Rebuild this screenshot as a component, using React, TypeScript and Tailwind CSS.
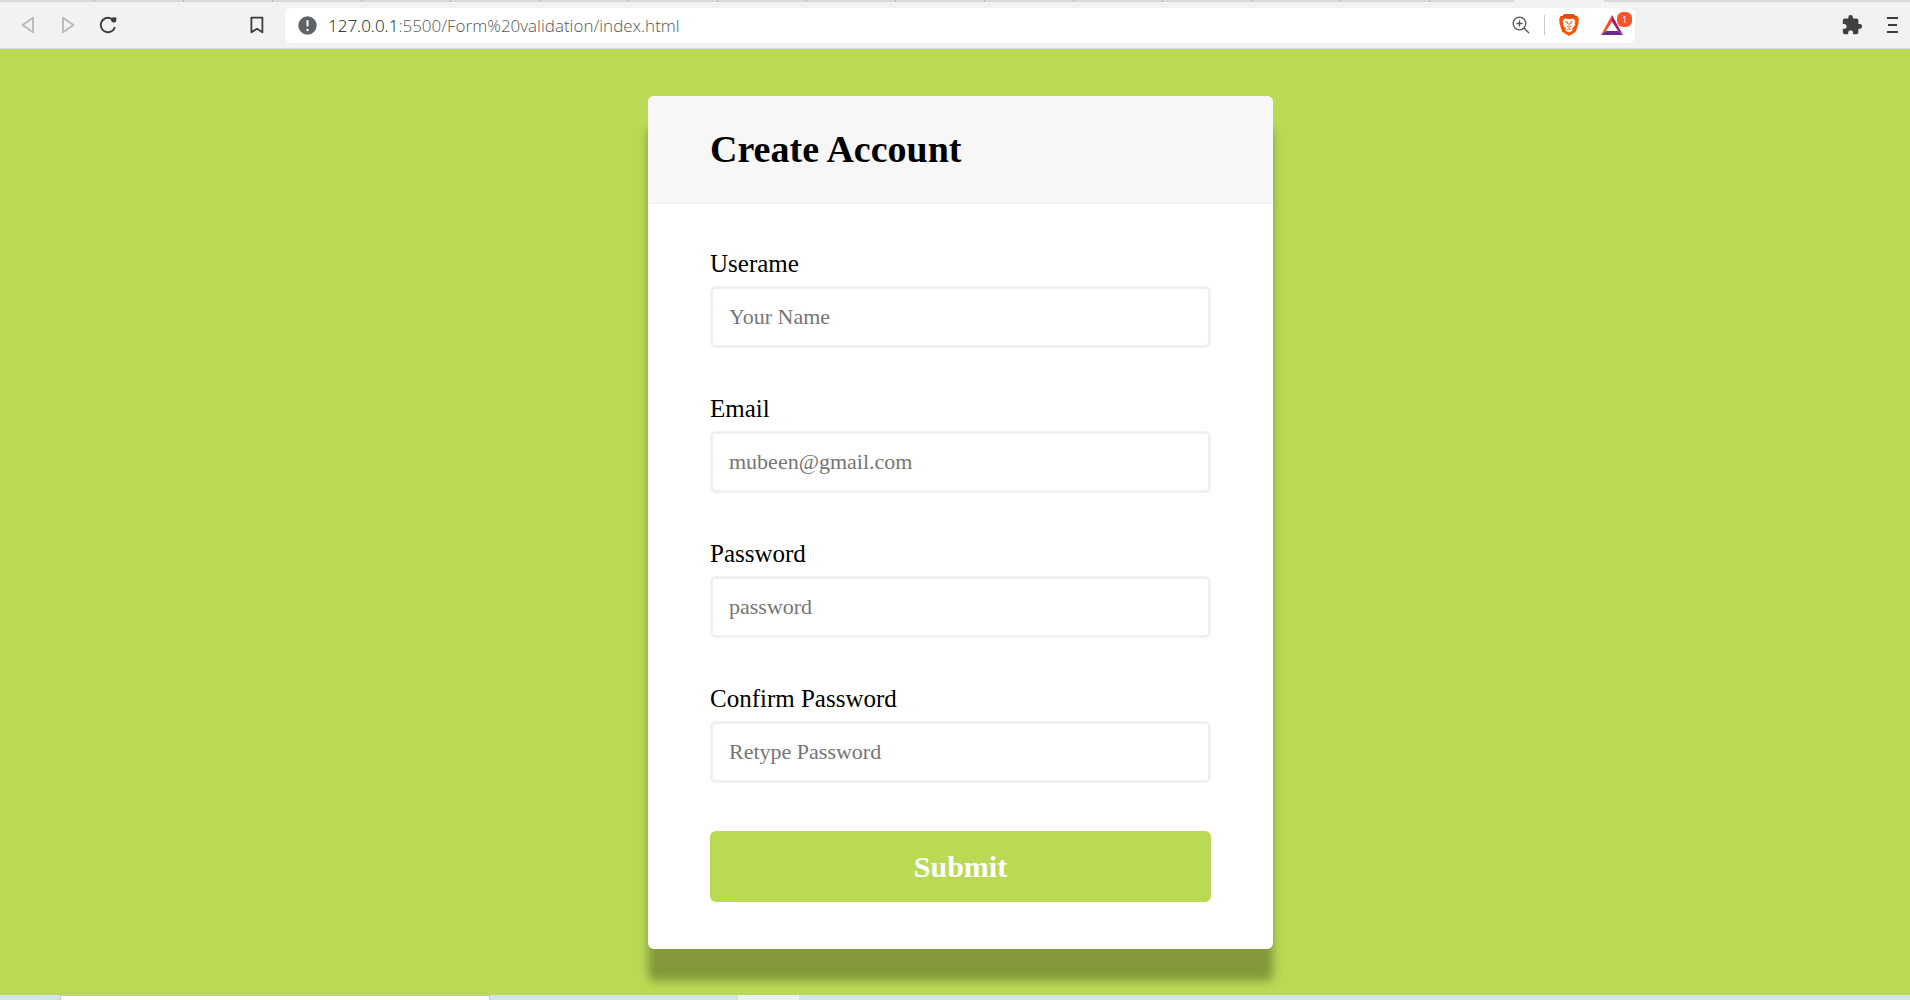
import React from "react";

const tabEdges = Array.from({ length: 16 });

const fields = [
  { id: "username", label: "Userame", placeholder: "Your Name", type: "text" },
  { id: "email", label: "Email", placeholder: "mubeen@gmail.com", type: "email" },
  { id: "password", label: "Password", placeholder: "password", type: "password" },
  { id: "confirm", label: "Confirm Password", placeholder: "Retype Password", type: "password" },
];

function TabStrip() {
  return (
    <div className="flex h-[2px] bg-[#d5dade] pl-[6px]">
      {tabEdges.map((_, i) => (
        <div key={i} className="w-[89px] shrink-0 border-r border-[#b3b8bc]" />
      ))}
      <div className="ml-[84px] w-[90px] bg-[#f2f2f2]" />
    </div>
  );
}

function Toolbar() {
  return (
    <div className="flex h-[47px] items-center border-b border-[#d4d7da] bg-[#f2f2f2] pl-5 pr-[11px]">
      <button aria-label="Back" className="mr-5 text-[#b9b9b9]">
        <svg width="20" height="20" viewBox="0 0 20 20" fill="none" stroke="currentColor" strokeWidth="1.8" strokeLinejoin="round">
          <path d="M13 2.7v14.6L2.6 10z" />
        </svg>
      </button>
      <button aria-label="Forward" className="mr-[19px] text-[#b9b9b9]">
        <svg width="20" height="20" viewBox="0 0 20 20" fill="none" stroke="currentColor" strokeWidth="1.8" strokeLinejoin="round">
          <path d="M3 2.7v14.6L13.4 10z" />
        </svg>
      </button>
      <button aria-label="Reload" className="text-[#3c3c3c]">
        <svg width="18" height="20" viewBox="0 0 18 20" fill="none" stroke="currentColor" strokeWidth="1.9" strokeLinecap="round">
          <path d="M11.500 3.300A7.200 7.200 0 1 0 15.600 12.800" />
          <path d="M11.800 3.500q.3-1 1.700-1l2.700-.2q1.300.3 1.300 1.800l-.5 2.200q-.5 1.500-2 1.300-2.600-.1-3.200-2.600z" fill="currentColor" stroke="none" />
        </svg>
      </button>
      <button aria-label="Bookmark" className="ml-[131px] text-[#3c3c3c]">
        <svg width="18" height="20" viewBox="0 0 18 20" fill="none" stroke="currentColor" strokeWidth="1.8" strokeLinejoin="round">
          <path d="M3.4 2.6h11v14.700L9 13.800l-5.600 3.500z" />
        </svg>
      </button>
      <div className="ml-[19px] flex h-[35px] w-[1350px] items-center rounded-md bg-white pl-[13px] pr-[2px]">
        <svg width="19" height="19" viewBox="0 0 19 19">
          <circle cx="9.5" cy="9.5" r="9.2" fill="#5f6368" />
          <path d="M9.5 4.2v6.2" stroke="#fff" strokeWidth="2" />
          <circle cx="9.5" cy="14" r="1.2" fill="#fff" />
        </svg>
        <div className="ml-[11px] flex-1 pt-px font-['Open_Sans','Noto_Sans',sans-serif] text-[17px] font-light text-[#555]">
          <span className="text-[#111]">127.0.0.1</span>:5500/Form%20validation/index.html
        </div>
        <button aria-label="Zoom" className="text-[#555]">
          <svg width="18" height="18" viewBox="0 0 18 18" fill="none" stroke="currentColor" strokeWidth="1.3" strokeLinecap="round">
            <circle cx="7.5" cy="7.5" r="6.3" />
            <path d="M12 12l4.700 4.700M5 7.500h5M7.500 5v5" />
          </svg>
        </button>
        <div className="mx-[14px] h-5 w-px bg-[#c8c8c8]" />
        <button aria-label="Shields">
          <svg width="20" height="24" viewBox="0 0 20 24">
            <path d="M5.500 1h9l2 2h2l1.400 3.400-.5 2 .2 1.600L16.800 18.800 10 23 3.200 18.800.400 10l.2-1.600-.5-2L1.500 3h2z" fill="#ff5000" />
            <path d="M5.500 1h9l2 2h1.500L16 5H4L2 3h1.500z" fill="#e24c0a" />
            <path d="M5.800 5.600l4.200.6 4.200-.6 2.200 2.600-.8 2.400.5 1.400-3 3.800.6 1.700L10 19.600 6.300 17.500l.6-1.700-3-3.800.5-1.400-.8-2.400z" fill="#fff" />
            <path d="M6 8.700l2.500.5-.2 2M14 8.700l-2.500.5.2 2M10 10v3.300M7.800 13L10 14.300 12.200 13M8 16.500l2-.8 2 .8" fill="none" stroke="#ff5000" strokeWidth=".9" />
          </svg>
        </button>
        <button aria-label="Rewards, 1 new" className="relative ml-[22px] mr-[10px]">
          <svg width="22" height="20" viewBox="0 0 22 20">
            <path d="M11 0L0 20l5-4L11 6.500z" fill="#ff4724" />
            <path d="M11 0l11 20-5-4-6-9.500z" fill="#9e1f63" />
            <path d="M0 20h22l-5-4H5z" fill="#662d91" />
          </svg>
          <span className="absolute -right-[9px] -top-[3px] flex size-[15px] items-center justify-center rounded-md bg-[#fb542b] font-['Open_Sans',sans-serif] text-[9px] text-white">
            1
          </span>
        </button>
      </div>
      <button aria-label="Extensions" className="ml-auto text-[#404040]">
        <svg width="22" height="22" viewBox="0 0 24 24" fill="currentColor">
          <path d="M20.500 11H19V7c0-1.100-.9-2-2-2h-4V3.500a2.500 2.500 0 0 0-5 0V5H4c-1.100 0-1.990.9-1.990 2v3.800H3.500c1.490 0 2.700 1.210 2.700 2.700s-1.210 2.700-2.700 2.700H2V20c0 1.100.9 2 2 2h3.800v-1.500c0-1.490 1.210-2.700 2.700-2.700s2.700 1.210 2.700 2.700V22H17c1.100 0 2-.9 2-2v-4h1.500a2.500 2.500 0 0 0 0-5z" />
        </svg>
      </button>
      <button aria-label="Menu" className="ml-6 text-[#3c3c3c]">
        <svg width="12" height="18" viewBox="0 0 12 18" stroke="currentColor" strokeWidth="1.800">
          <path d="M0 2h11M1 9h9M0 16h11" />
        </svg>
      </button>
    </div>
  );
}

function AccountForm() {
  return (
    <section className="w-[625px] overflow-hidden rounded-md bg-white shadow-[0_32px_10px_rgba(0,0,0,0.3)]">
      <header className="border-b border-[#f0f0f0] bg-[#f7f7f7] px-[62px] pb-[34px] pt-[34px]">
        <h1 className="text-[38px] font-bold leading-[39px] text-black">Create Account</h1>
      </header>
      <form className="px-[62px] pb-[47px] pt-[46px]" onSubmit={(e) => e.preventDefault()}>
        {fields.map((f) => (
          <div key={f.id} className="mb-[47px]">
            <label htmlFor={f.id} className="mb-2 block text-[25px] leading-[28px] text-black">
              {f.label}
            </label>
            <input
              id={f.id}
              type={f.type}
              placeholder={f.placeholder}
              className="block h-[62px] w-full rounded-md border-[3px] border-[#f0f0f0] bg-white px-4 text-[22px] text-black placeholder:text-[#757575]"
            />
          </div>
        ))}
        <button type="submit" className="mt-px h-[71px] w-full rounded-md bg-[#bada55] text-[30px] font-bold text-white">
          Submit
        </button>
      </form>
    </section>
  );
}

function TaskbarEdge() {
  return (
    <div className="flex h-[5px] bg-[#d0e5ec]">
      <div className="ml-[60px] w-[430px] border border-b-0 border-[#c4c8cc] bg-white" />
      <div className="ml-[248px] w-[61px] bg-[#e9f3f8]" />
    </div>
  );
}

export default function App() {
  return (
    <div className="flex min-h-screen flex-col bg-[#bada55] font-['Liberation_Serif',serif]">
      <TabStrip />
      <Toolbar />
      <main className="flex flex-1 items-start justify-center pl-[11px] pt-[47px]">
        <AccountForm />
      </main>
      <TaskbarEdge />
    </div>
  );
}
